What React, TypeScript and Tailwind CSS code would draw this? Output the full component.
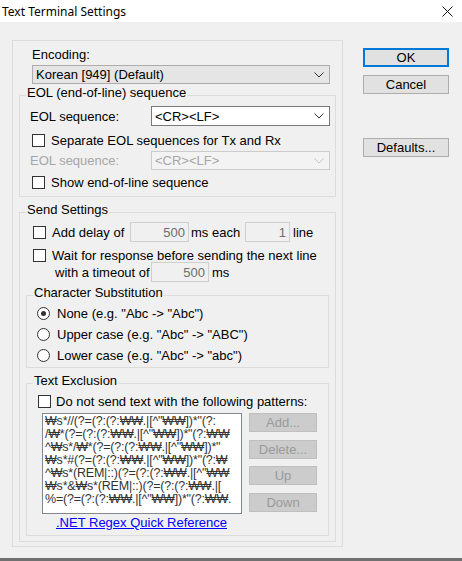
const patterns = [
  '₩s*//(?=(?:(?:₩₩.|[^"₩₩])*"(?:',
  '/₩*(?=(?:(?:₩₩.|[^"₩₩])*"(?:₩₩',
  '^₩s*/₩*(?=(?:(?:₩₩.|[^"₩₩])*"',
  '₩s*#(?=(?:(?:₩₩.|[^"₩₩])*"(?:₩',
  '^₩s*(REM|::)(?=(?:(?:₩₩.|[^"₩₩',
  '₩s*&₩s*(REM|::)(?=(?:(?:₩₩.|[',
  '%=(?=(?:(?:₩₩.|[^"₩₩])*"(?:₩₩.',
];

function Chevron({ disabled }: { disabled?: boolean }) {
  return (
    <svg width="10" height="6" viewBox="0 0 10 6" className="shrink-0">
      <path d="M0.5 0.5 L5 5 L9.5 0.5" fill="none" stroke={disabled ? "#c4c4c4" : "#333"} strokeWidth="1" />
    </svg>
  );
}

function Checkbox() {
  return <span className="block h-[13px] w-[13px] shrink-0 border border-[#333] bg-white" />;
}

function Radio({ checked }: { checked?: boolean }) {
  return (
    <span className="flex h-[13px] w-[13px] shrink-0 items-center justify-center rounded-full border border-[#333] bg-white">
      {checked && <span className="h-[5px] w-[5px] rounded-full bg-[#333]" />}
    </span>
  );
}

function Group({ label, className, children }: { label: string; className: string; children: React.ReactNode }) {
  return (
    <div className={`relative flex flex-col border border-[#dcdcdc] ${className}`}>
      <span className="absolute left-[6px] top-[-11px] bg-[#f0f0f0] px-[1px] leading-[15px]">{label}</span>
      {children}
    </div>
  );
}

function NumBox({ value, w }: { value: string; w: string }) {
  return (
    <span className={`flex h-[20px] ${w} shrink-0 items-center justify-end border border-[#cfcfcf] pr-[3px] text-[#6d6d6d]`}>
      {value}
    </span>
  );
}

function SideButton({ label, className = "" }: { label: string; className?: string }) {
  return (
    <div
      className={`flex h-[19px] w-[68px] items-center justify-center border border-[#bfbfbf] bg-[#cccccc] text-[#9a9a9a] ${className}`}
    >
      {label}
    </div>
  );
}

export default function App() {
  return (
    <div className="flex h-[561px] w-[462px] flex-col font-['Liberation_Sans','Noto_Sans_CJK_KR',sans-serif] text-[13px] leading-[15px] text-black">
      {/* title bar */}
      <div className="flex h-[22px] shrink-0 items-center justify-between bg-white pl-[2px] pr-[9px]">
        <span className="font-['Noto_Sans',sans-serif] text-[12px]">Text Terminal Settings</span>
        <svg width="11" height="11" viewBox="0 0 11 11">
          <path d="M0.5 0.5 L10.5 10.5 M10.5 0.5 L0.5 10.5" stroke="#111" strokeWidth="1" />
        </svg>
      </div>

      <div className="flex flex-1 border-b-[3px] border-[#707070] bg-[#f0f0f0] pl-[12px] pt-[18px]">
        {/* main panel */}
        <div className="flex h-[507px] w-[331px] shrink-0 flex-col border border-[#dcdcdc] px-[6px]">
          <div className="ml-[13px] mt-[6px]">Encoding:</div>
          <div className="ml-[13px] mt-[3px] flex h-[19px] w-[298px] items-center justify-between border border-[#adadad] bg-[#e5e5e5] pl-[3px] pr-[5px]">
            <span>Korean [949] (Default)</span>
            <Chevron />
          </div>

          <Group label="EOL (end-of-line) sequence" className="mt-[11px] h-[102px]">
            <div className="mt-[10px] flex h-[20px] items-center pl-[10px]">
              <span className="w-[121px]">EOL sequence:</span>
              <div className="flex h-[20px] w-[179px] items-center justify-between border border-[#7a7a7a] bg-white pl-[3px] pr-[5px]">
                <span>&lt;CR&gt;&lt;LF&gt;</span>
                <Chevron />
              </div>
            </div>
            <div className="mt-[8px] flex h-[13px] items-center pl-[12px]">
              <Checkbox />
              <span className="ml-[6px]">Separate EOL sequences for Tx and Rx</span>
            </div>
            <div className="mt-[4px] flex h-[19px] items-center pl-[10px] text-[#a6a6a6]">
              <span className="w-[121px]">EOL sequence:</span>
              <div className="flex h-[19px] w-[179px] items-center justify-between border border-[#cccccc] bg-[#f3f3f3] pl-[3px] pr-[5px]">
                <span>&lt;CR&gt;&lt;LF&gt;</span>
                <Chevron disabled />
              </div>
            </div>
            <div className="mt-[6px] flex h-[13px] items-center pl-[12px]">
              <Checkbox />
              <span className="ml-[6px]">Show end-of-line sequence</span>
            </div>
          </Group>

          <Group label="Send Settings" className="mt-[15px] h-[330px]">
            <div className="mt-[9px] flex h-[20px] items-center pl-[13px]">
              <Checkbox />
              <span className="ml-[6px] w-[78px] shrink-0">Add delay of</span>
              <NumBox value="500" w="w-[59px]" />
              <span className="ml-[2px] w-[54px] shrink-0">ms each</span>
              <NumBox value="1" w="w-[45px]" />
              <span className="ml-[3px]">line</span>
            </div>
            <div className="mt-[7px] flex h-[13px] items-center pl-[13px]">
              <Checkbox />
              <span className="ml-[6px] whitespace-nowrap">Wait for response before sending the next line</span>
            </div>
            <div className="flex h-[20px] items-center pl-[35px]">
              <span className="w-[96px] shrink-0">with a timeout of</span>
              <NumBox value="500" w="w-[58px]" />
              <span className="ml-[3px]">ms</span>
            </div>

            <Group label="Character Substitution" className="ml-[6px] mt-[13px] h-[73px] w-[303px]">
              <div className="mt-[11px] flex h-[13px] items-center pl-[10px]">
                <Radio checked />
                <span className="ml-[7px]">None (e.g. "Abc -&gt; "Abc")</span>
              </div>
              <div className="mt-[8px] flex h-[13px] items-center pl-[10px]">
                <Radio />
                <span className="ml-[7px]">Upper case (e.g. "Abc" -&gt; "ABC")</span>
              </div>
              <div className="mt-[8px] flex h-[13px] items-center pl-[10px]">
                <Radio />
                <span className="ml-[7px]">Lower case (e.g. "Abc" -&gt; "abc")</span>
              </div>
            </Group>

            <Group label="Text Exclusion" className="ml-[6px] mt-[15px] h-[153px] w-[303px]">
              <div className="mt-[11px] flex h-[13px] items-center pl-[11px]">
                <Checkbox />
                <span className="ml-[5px] whitespace-nowrap">Do not send text with the following patterns:</span>
              </div>
              <div className="mt-[5px] flex pl-[15px]">
                <div className="h-[101px] w-[200px] shrink-0 overflow-hidden border border-[#828790] bg-white pl-[2px] pt-[1px] text-[12.5px] leading-[13px] tracking-[-0.2px] text-[#333]">
                  {patterns.map((p) => (
                    <div key={p} className="whitespace-nowrap">
                      {p}
                    </div>
                  ))}
                </div>
                <div className="ml-[7px] flex flex-col">
                  <SideButton label="Add..." />
                  <SideButton label="Delete..." className="mt-[8px]" />
                  <SideButton label="Up" className="mt-[7px]" />
                  <SideButton label="Down" className="mt-[8px]" />
                </div>
              </div>
              <div className="mt-[1px] pl-[29px]">
                <span className="text-[#0000ff] underline">.NET Regex Quick Reference</span>
              </div>
            </Group>
          </Group>
        </div>

        {/* right buttons */}
        <div className="ml-[20px] flex flex-col">
          <div className="mt-[8px] flex h-[19px] w-[86px] items-center justify-center border-2 border-[#0078d7] bg-[#e1e1e1]">
            OK
          </div>
          <div className="mt-[8px] flex h-[19px] w-[86px] items-center justify-center border border-[#adadad] bg-[#e1e1e1]">
            Cancel
          </div>
          <div className="mt-[44px] flex h-[19px] w-[86px] items-center justify-center border border-[#adadad] bg-[#e1e1e1]">
            Defaults...
          </div>
        </div>
      </div>
    </div>
  );
}
